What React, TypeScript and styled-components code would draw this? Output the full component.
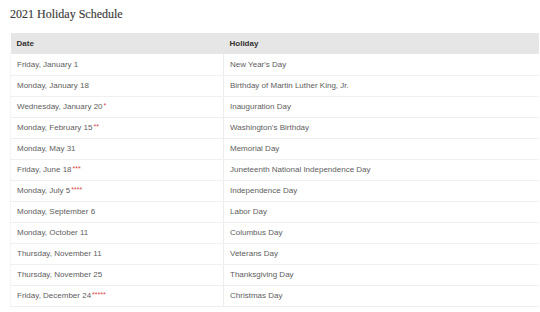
import styled, { createGlobalStyle } from 'styled-components'

const GlobalStyle = createGlobalStyle`
    body {
        margin: 0;
        background: #fff;
    }
`

const Page = styled.div`
    padding: 7px 1px 0 10px;
`

const Title = styled.h2`
    margin: 0 0 12px;
    font-family: "Liberation Serif", "DejaVu Serif", serif;
    font-weight: normal;
    font-size: 12px;
    line-height: 14px;
    color: #3a3a3a;
    -webkit-text-stroke: 0.15px #3a3a3a;
`

const Table = styled.table`
    width: 100%;
    border-collapse: collapse;
    table-layout: fixed;
    font-family: "Liberation Sans", Arial, sans-serif;
    font-size: 8px;
`

const HeadCell = styled.th`
    background: #e6e6e6;
    color: #333;
    font-weight: bold;
    text-align: left;
    height: 21px;
    padding: 0 6px;
    box-sizing: border-box;
`

const Cell = styled.td<{ $divider?: boolean }>`
    color: #5e5e5e;
    height: 21px;
    padding: 0 6px;
    box-sizing: border-box;
    border-bottom: 1px solid #f0f0f0;
    border-left: 1px solid ${props => props.$divider ? '#ececec' : '#f6f6f6'};
`

const Star = styled.span`
    color: #d94545;
    font-size: 7px;
    vertical-align: 1px;
    margin-left: 1px;
`

interface Holiday {
    date: string,
    stars: number,
    name: string,
}

const holidays: Holiday[] = [
    { date: 'Friday, January 1', stars: 0, name: "New Year's Day" },
    { date: 'Monday, January 18', stars: 0, name: 'Birthday of Martin Luther King, Jr.' },
    { date: 'Wednesday, January 20', stars: 1, name: 'Inauguration Day' },
    { date: 'Monday, February 15', stars: 2, name: "Washington's Birthday" },
    { date: 'Monday, May 31', stars: 0, name: 'Memorial Day' },
    { date: 'Friday, June 18', stars: 3, name: 'Juneteenth National Independence Day' },
    { date: 'Monday, July 5', stars: 4, name: 'Independence Day' },
    { date: 'Monday, September 6', stars: 0, name: 'Labor Day' },
    { date: 'Monday, October 11', stars: 0, name: 'Columbus Day' },
    { date: 'Thursday, November 11', stars: 0, name: 'Veterans Day' },
    { date: 'Thursday, November 25', stars: 0, name: 'Thanksgiving Day' },
    { date: 'Friday, December 24', stars: 5, name: 'Christmas Day' },
]

const App = () => {
    return <Page>
        <GlobalStyle />
        <Title>2021 Holiday Schedule</Title>
        <Table>
            <colgroup>
                <col style={{ width: 213 }} />
                <col />
            </colgroup>
            <thead>
                <tr>
                    <HeadCell>Date</HeadCell>
                    <HeadCell>Holiday</HeadCell>
                </tr>
            </thead>
            <tbody>
                {
                    holidays.map(h => {
                        return <tr key={h.date}>
                            <Cell>
                                {h.date}
                                {h.stars > 0 && <Star>{'*'.repeat(h.stars)}</Star>}
                            </Cell>
                            <Cell $divider>{h.name}</Cell>
                        </tr>
                    })
                }
            </tbody>
        </Table>
    </Page>
}
export default App
